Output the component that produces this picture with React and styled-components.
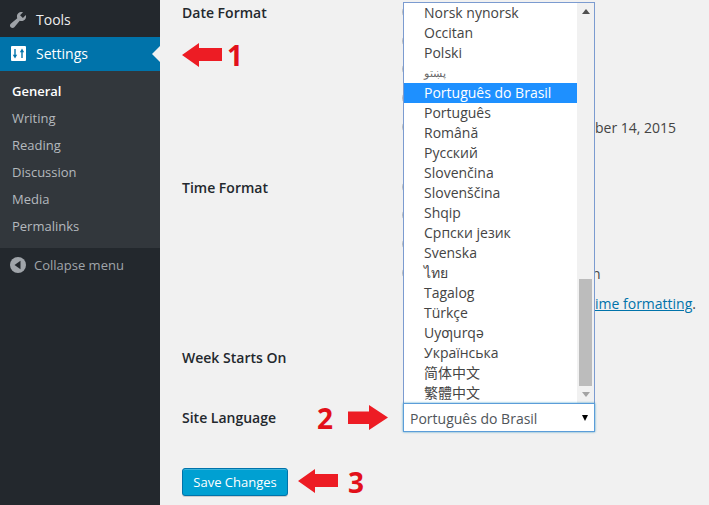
import React from 'react'
import styled, { createGlobalStyle } from 'styled-components'

const languages = [
  'Norsk nynorsk',
  'Occitan',
  'Polski',
  'پښتو',
  'Português do Brasil',
  'Português',
  'Română',
  'Русский',
  'Slovenčina',
  'Slovenščina',
  'Shqip',
  'Српски језик',
  'Svenska',
  'ไทย',
  'Tagalog',
  'Türkçe',
  'Uyƣurqə',
  'Українська',
  '简体中文',
  '繁體中文',
]

const submenu = ['General', 'Writing', 'Reading', 'Discussion', 'Media', 'Permalinks']

function Arrow({ left }) {
  return (
    <ArrowSvg viewBox="0 0 40 25">
      <path
        fill="#ed1c24"
        d={left ? 'M0 12 L17 0 V5 H40 V18 H17 V24 Z' : 'M40 12.5 L21 0 V6.5 H0 V19 H21 V25 Z'}
      />
    </ArrowSvg>
  )
}

function WrenchIcon() {
  return (
    <svg width="20" height="20" viewBox="0 0 20 20">
      <path
        fill="#9ea3a8"
        d="M16.68 9.77c-1.34 1.34-3.3 1.67-4.95.99l-5.41 6.52c-.99.99-2.59.99-3.58 0s-.99-2.59 0-3.58l6.52-5.41c-.68-1.65-.35-3.61.99-4.95 1.28-1.28 3.12-1.62 4.72-1.06l-2.89 2.89 2.82 2.82 2.89-2.89c.56 1.6.22 3.44-1.06 4.72z"
      />
    </svg>
  )
}

function SettingsIcon() {
  return (
    <svg width="15" height="15" viewBox="0 0 15 15">
      <rect width="15" height="15" rx="1" fill="#fff" />
      <path d="M4 3v6" stroke="#0073aa" strokeWidth="1.4" />
      <path d="M4 12.5 1.8 8.8h4.4z" fill="#0073aa" />
      <path d="M11 12V6" stroke="#0073aa" strokeWidth="1.4" />
      <path d="M11 2.5 8.8 6.2h4.4z" fill="#0073aa" />
    </svg>
  )
}

function CollapseIcon() {
  return (
    <svg width="16" height="16" viewBox="0 0 16 16">
      <circle cx="8" cy="8" r="8" fill="#a0a5aa" />
      <path d="M10.5 3.8v8.4L4.5 8z" fill="#23282d" />
    </svg>
  )
}

export default function App() {
  return (
    <Page>
      <GlobalStyle />
      <Sidebar>
        <MenuItem>
          <MenuIcon>
            <WrenchIcon />
          </MenuIcon>
          Tools
        </MenuItem>
        <CurrentItem>
          <MenuIcon>
            <SettingsIcon />
          </MenuIcon>
          Settings
        </CurrentItem>
        <Submenu>
          {submenu.map((name, i) => (
            <SubItem key={name} $active={i === 0}>
              {name}
            </SubItem>
          ))}
        </Submenu>
        <Collapse>
          <CollapseIcon />
          Collapse menu
        </Collapse>
      </Sidebar>

      <Main>
        <FormTable>
          <Label>
            Date Format
            <DateNote>
              <Arrow left />
              <Number>1</Number>
            </DateNote>
          </Label>
          <Field>
            <Option><Radio /></Option>
            <Option><Radio /></Option>
            <Option><Radio /></Option>
            <Option><Radio /></Option>
            <Option>
              <Radio />
              <Preview $offset={169}>ber 14, 2015</Preview>
            </Option>
          </Field>

          <TimeLabel>Time Format</TimeLabel>
          <TimeField>
            <Option><Radio /></Option>
            <Option><Radio /></Option>
            <Option><Radio /></Option>
            <Option>
              <Radio />
              <Preview $offset={166}>n</Preview>
            </Option>
            <Docs>
              <DocLink>ime formatting</DocLink>.
            </Docs>
          </TimeField>

          <WeekLabel>Week Starts On</WeekLabel>
          <WeekField />

          <LanguageLabel>Site Language</LanguageLabel>
          <LanguageField>
            <LanguageNote>
              <Number>2</Number>
              <Arrow />
            </LanguageNote>
            <SelectWrap>
              <Dropdown>
                <List>
                  {languages.map((name) => (
                    <ListItem
                      key={name}
                      $selected={name === 'Português do Brasil'}
                      $tiny={name === 'پښتو'}
                    >
                      {name}
                    </ListItem>
                  ))}
                </List>
                <Scrollbar>
                  <ScrollArrow $up />
                  <ScrollSpace />
                  <ScrollThumb />
                  <ScrollArrow />
                </Scrollbar>
              </Dropdown>
              <Select>
                Português do Brasil
                <SelectCaret />
              </Select>
            </SelectWrap>
          </LanguageField>
        </FormTable>

        <Submit>
          <SaveButton>Save Changes</SaveButton>
          <Arrow left />
          <Number>3</Number>
        </Submit>
      </Main>
    </Page>
  )
}

const GlobalStyle = createGlobalStyle`
  html, body {
    margin: 0;
    padding: 0;
    height: 100%;
    overflow: hidden;
    background: #f1f1f1;
  }
  body {
    font-family: "Open Sans", "Noto Sans", "Noto Sans CJK SC", sans-serif;
    font-size: 14px;
    color: #444;
  }
`

const Page = styled.div`
  display: flex;
  width: 709px;
  height: 505px;
  overflow: hidden;
`

const Sidebar = styled.div`
  width: 160px;
  flex-shrink: 0;
  display: flex;
  flex-direction: column;
  background: #23282d;
`

const MenuItem = styled.div`
  display: flex;
  align-items: center;
  height: 37px;
  padding-top: 2px;
  box-sizing: border-box;
  font-size: 14px;
  color: #eee;
`

const MenuIcon = styled.span`
  display: flex;
  justify-content: center;
  width: 36px;
`

const CurrentItem = styled(MenuItem)`
  position: relative;
  height: 34px;
  padding: 0 0 1px;
  background: #0073aa;
  color: #fff;

  &::after {
    content: '';
    position: absolute;
    right: 0;
    top: 9px;
    border: 8px solid transparent;
    border-left-width: 0;
    border-right-color: #f1f1f1;
  }
`

const Submenu = styled.div`
  display: flex;
  flex-direction: column;
  padding: 7px 0 8px;
  background: #32373c;
`

const SubItem = styled.div`
  height: 27px;
  line-height: 27px;
  padding-left: 12px;
  font-size: 13px;
  font-weight: ${(props) => (props.$active ? 600 : 400)};
  color: ${(props) => (props.$active ? '#fff' : '#b4b9be')};
`

const Collapse = styled.div`
  display: flex;
  align-items: center;
  gap: 8px;
  height: 34px;
  padding-left: 10px;
  font-size: 13px;
  color: #a0a5aa;
`

const Main = styled.div`
  flex: 1;
  padding-left: 22px;
  margin-top: -2.4px;
`

const FormTable = styled.div`
  display: grid;
  grid-template-columns: 220px 1fr;
`

const Label = styled.div`
  position: relative;
  height: 28.75px;
  line-height: 30.75px;
  font-size: 14px;
  font-weight: 600;
  color: #23282d;
`

const TimeLabel = styled(Label)`
  margin-top: 31px;
  line-height: 32.75px;
`

const WeekLabel = styled(Label)`
  margin-top: 25.4px;
  line-height: 28.75px;
`

const LanguageLabel = styled(Label)`
  margin-top: 30px;
`

const Field = styled.div`
  display: flex;
  flex-direction: column;
`

const TimeField = styled(Field)`
  margin-top: 31px;
`

const WeekField = styled(Field)`
  height: 28.75px;
  margin-top: 25.4px;
`

const LanguageField = styled(Field)`
  position: relative;
  margin-top: 30px;
`

const Option = styled.div`
  display: flex;
  align-items: center;
  height: 28.75px;
  white-space: nowrap;
`

const Radio = styled.span`
  width: 14px;
  height: 14px;
  flex-shrink: 0;
  margin-right: 8px;
  border: 1px solid #b4b9be;
  border-radius: 50%;
  background: #fff;
`

const Preview = styled.span`
  margin-left: ${(props) => props.$offset}px;
  padding-top: 2px;
`

const Docs = styled.div`
  height: 29px;
  line-height: 29px;
  margin-top: 2px;
  padding-left: 193px;
  white-space: nowrap;
`

const DocLink = styled.a`
  color: #0073aa;
  text-decoration: underline;
`

const DateNote = styled.div`
  position: absolute;
  left: 0;
  top: 42.5px;
  display: flex;
  align-items: center;
  gap: 5px;
`

const LanguageNote = styled.div`
  position: absolute;
  left: -85px;
  top: 0;
  display: flex;
  align-items: center;
  gap: 15px;
`

const ArrowSvg = styled.svg`
  width: 40px;
  height: 25px;
  flex-shrink: 0;
`

const Number = styled.span`
  font-size: 28px;
  line-height: 30px;
  font-weight: 700;
  color: #e2101a;
`

const SelectWrap = styled.div`
  position: relative;
  width: 192px;
  margin-left: 1px;
`

const Select = styled.div`
  position: relative;
  box-sizing: border-box;
  height: 29px;
  line-height: 29px;
  padding-left: 6px;
  background: #fff;
  border: 1px solid #5b9dd9;
  box-shadow: 0 0 2px rgba(30, 140, 190, 0.8);
  font-size: 14px;
  color: #50555a;
`

const SelectCaret = styled.span`
  position: absolute;
  right: 6px;
  top: 11px;
  border-left: 3px solid transparent;
  border-right: 3px solid transparent;
  border-top: 6px solid #000;
`

const Dropdown = styled.div`
  position: absolute;
  left: 0;
  bottom: 100%;
  width: 192px;
  box-sizing: border-box;
  display: flex;
  border: 1px solid #7b9bd0;
  border-bottom: 0;
  background: #fff;
`

const List = styled.div`
  flex: 1;
  display: flex;
  flex-direction: column;
`

const ListItem = styled.div`
  height: 20px;
  line-height: 20px;
  padding-left: 20px;
  white-space: nowrap;
  font-size: ${(props) => (props.$tiny ? '11px' : '14px')};
  background: ${(props) => (props.$selected ? '#1e90ff' : '#fff')};
  color: ${(props) => (props.$selected ? '#fff' : props.$tiny ? '#666' : '#444')};
`

const Scrollbar = styled.div`
  width: 17px;
  display: flex;
  flex-direction: column;
  align-items: center;
  background: #f1f1f1;
`

const ScrollArrow = styled.span`
  flex-shrink: 0;
  width: 0;
  height: 0;
  margin: 6px 0;
  border-left: 4px solid transparent;
  border-right: 4px solid transparent;
  ${(props) =>
    props.$up ? 'border-bottom: 5px solid #505050;' : 'border-top: 5px solid #a3a3a3;'}
`

const ScrollSpace = styled.div`
  flex: 1;
`

const ScrollThumb = styled.div`
  width: 13px;
  height: 107px;
  flex-shrink: 0;
  background: #bcbcbc;
`

const Submit = styled.div`
  display: flex;
  align-items: center;
  margin-top: 35px;
  gap: 10px;
`

const SaveButton = styled.button`
  box-sizing: border-box;
  width: 106px;
  height: 28px;
  padding: 0;
  background: #00a0d2;
  border: 1px solid #0073aa;
  border-radius: 3px;
  box-shadow: inset 0 1px 0 rgba(120, 200, 230, 0.5), 0 1px 0 rgba(0, 0, 0, 0.15);
  color: #fff;
  font-family: inherit;
  font-size: 13px;
`
